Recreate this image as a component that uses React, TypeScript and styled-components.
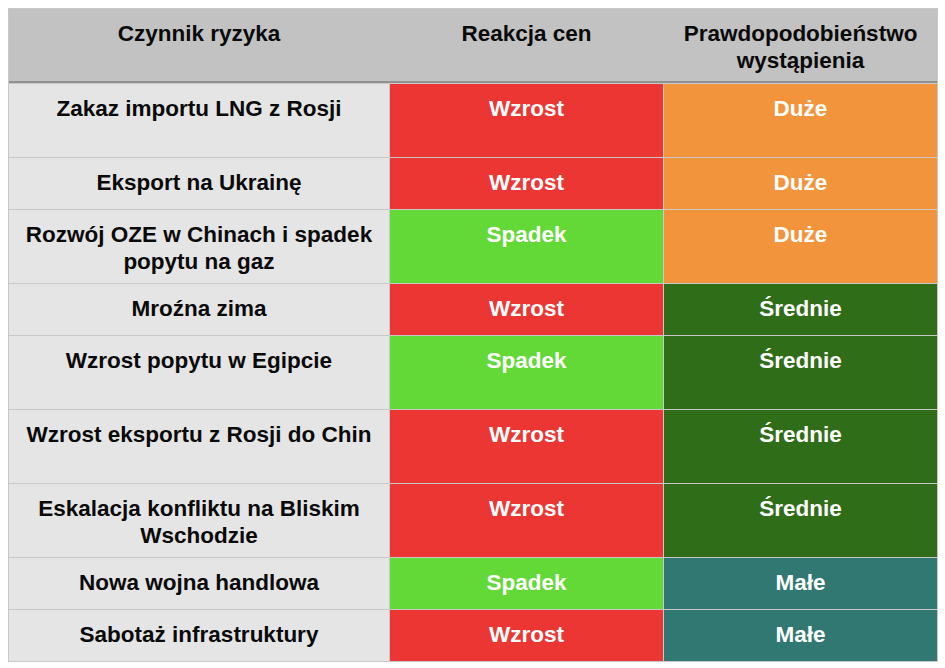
import React from "react";
import styled, { createGlobalStyle } from "styled-components";

const GlobalStyle = createGlobalStyle`
  html, body {
    margin: 0;
    padding: 0;
    background: #ffffff;
  }
  body {
    font-family: "Liberation Sans", Arial, Helvetica, sans-serif;
  }
`;

const Page = styled.div`
  padding: 8px;
`;

const Table = styled.div`
  display: grid;
  grid-template-columns: 380px 273px 273px;
  column-gap: 1px;
  row-gap: 1px;
  width: 930px;
  box-sizing: border-box;
  background: #c8c8c8;
  border: 1px solid #c8c8c8;
`;

const HeaderRow = styled.div`
  grid-column: 1 / -1;
  display: grid;
  grid-template-columns: 380px 273px 273px;
  column-gap: 1px;
  height: 74px;
  box-sizing: border-box;
  background: #c1c2c1;
  border-bottom: 2px solid #909190;
`;

const HeaderCell = styled.div`
  padding: 11px 6px 0;
  text-align: center;
  font-size: 22.5px;
  line-height: 27px;
  font-weight: 700;
  color: #0a0a0a;
`;

type Tone = "red" | "green" | "orange" | "dark" | "teal";

const toneColors: Record<Tone, string> = {
  red: "#ec3633",
  green: "#63d937",
  orange: "#f2943c",
  dark: "#2f6d18",
  teal: "#317873",
};

const Cell = styled.div<{ $tall: boolean; $tone?: Tone }>`
  box-sizing: border-box;
  height: ${(p) => (p.$tall ? 73 : 51)}px;
  padding: 11px 6px 0;
  text-align: center;
  font-size: 22.5px;
  line-height: 27px;
  font-weight: 700;
  background: ${(p) => (p.$tone ? toneColors[p.$tone] : "#e5e5e5")};
  color: ${(p) => (p.$tone ? "#ffffff" : "#0a0a0a")};
`;

type Row = {
  factor: string;
  price: "Wzrost" | "Spadek";
  chance: "Duże" | "Średnie" | "Małe";
  tall: boolean;
};

const rows: Row[] = [
  { factor: "Zakaz importu LNG z Rosji", price: "Wzrost", chance: "Duże", tall: true },
  { factor: "Eksport na Ukrainę", price: "Wzrost", chance: "Duże", tall: false },
  { factor: "Rozwój OZE w Chinach i spadek popytu na gaz", price: "Spadek", chance: "Duże", tall: true },
  { factor: "Mroźna zima", price: "Wzrost", chance: "Średnie", tall: false },
  { factor: "Wzrost popytu w Egipcie", price: "Spadek", chance: "Średnie", tall: true },
  { factor: "Wzrost eksportu z Rosji do Chin", price: "Wzrost", chance: "Średnie", tall: true },
  { factor: "Eskalacja konfliktu na Bliskim Wschodzie", price: "Wzrost", chance: "Średnie", tall: true },
  { factor: "Nowa wojna handlowa", price: "Spadek", chance: "Małe", tall: false },
  { factor: "Sabotaż infrastruktury", price: "Wzrost", chance: "Małe", tall: false },
];

const priceTone = (p: Row["price"]): Tone => (p === "Wzrost" ? "red" : "green");
const chanceTone = (c: Row["chance"]): Tone =>
  c === "Duże" ? "orange" : c === "Średnie" ? "dark" : "teal";

export default function App() {
  return (
    <Page>
      <GlobalStyle />
      <Table>
        <HeaderRow>
          <HeaderCell>Czynnik ryzyka</HeaderCell>
          <HeaderCell>Reakcja cen</HeaderCell>
          <HeaderCell>Prawdopodobieństwo wystąpienia</HeaderCell>
        </HeaderRow>
        {rows.map((r) => (
          <React.Fragment key={r.factor}>
            <Cell $tall={r.tall}>{r.factor}</Cell>
            <Cell $tall={r.tall} $tone={priceTone(r.price)}>
              {r.price}
            </Cell>
            <Cell $tall={r.tall} $tone={chanceTone(r.chance)}>
              {r.chance}
            </Cell>
          </React.Fragment>
        ))}
      </Table>
    </Page>
  );
}
